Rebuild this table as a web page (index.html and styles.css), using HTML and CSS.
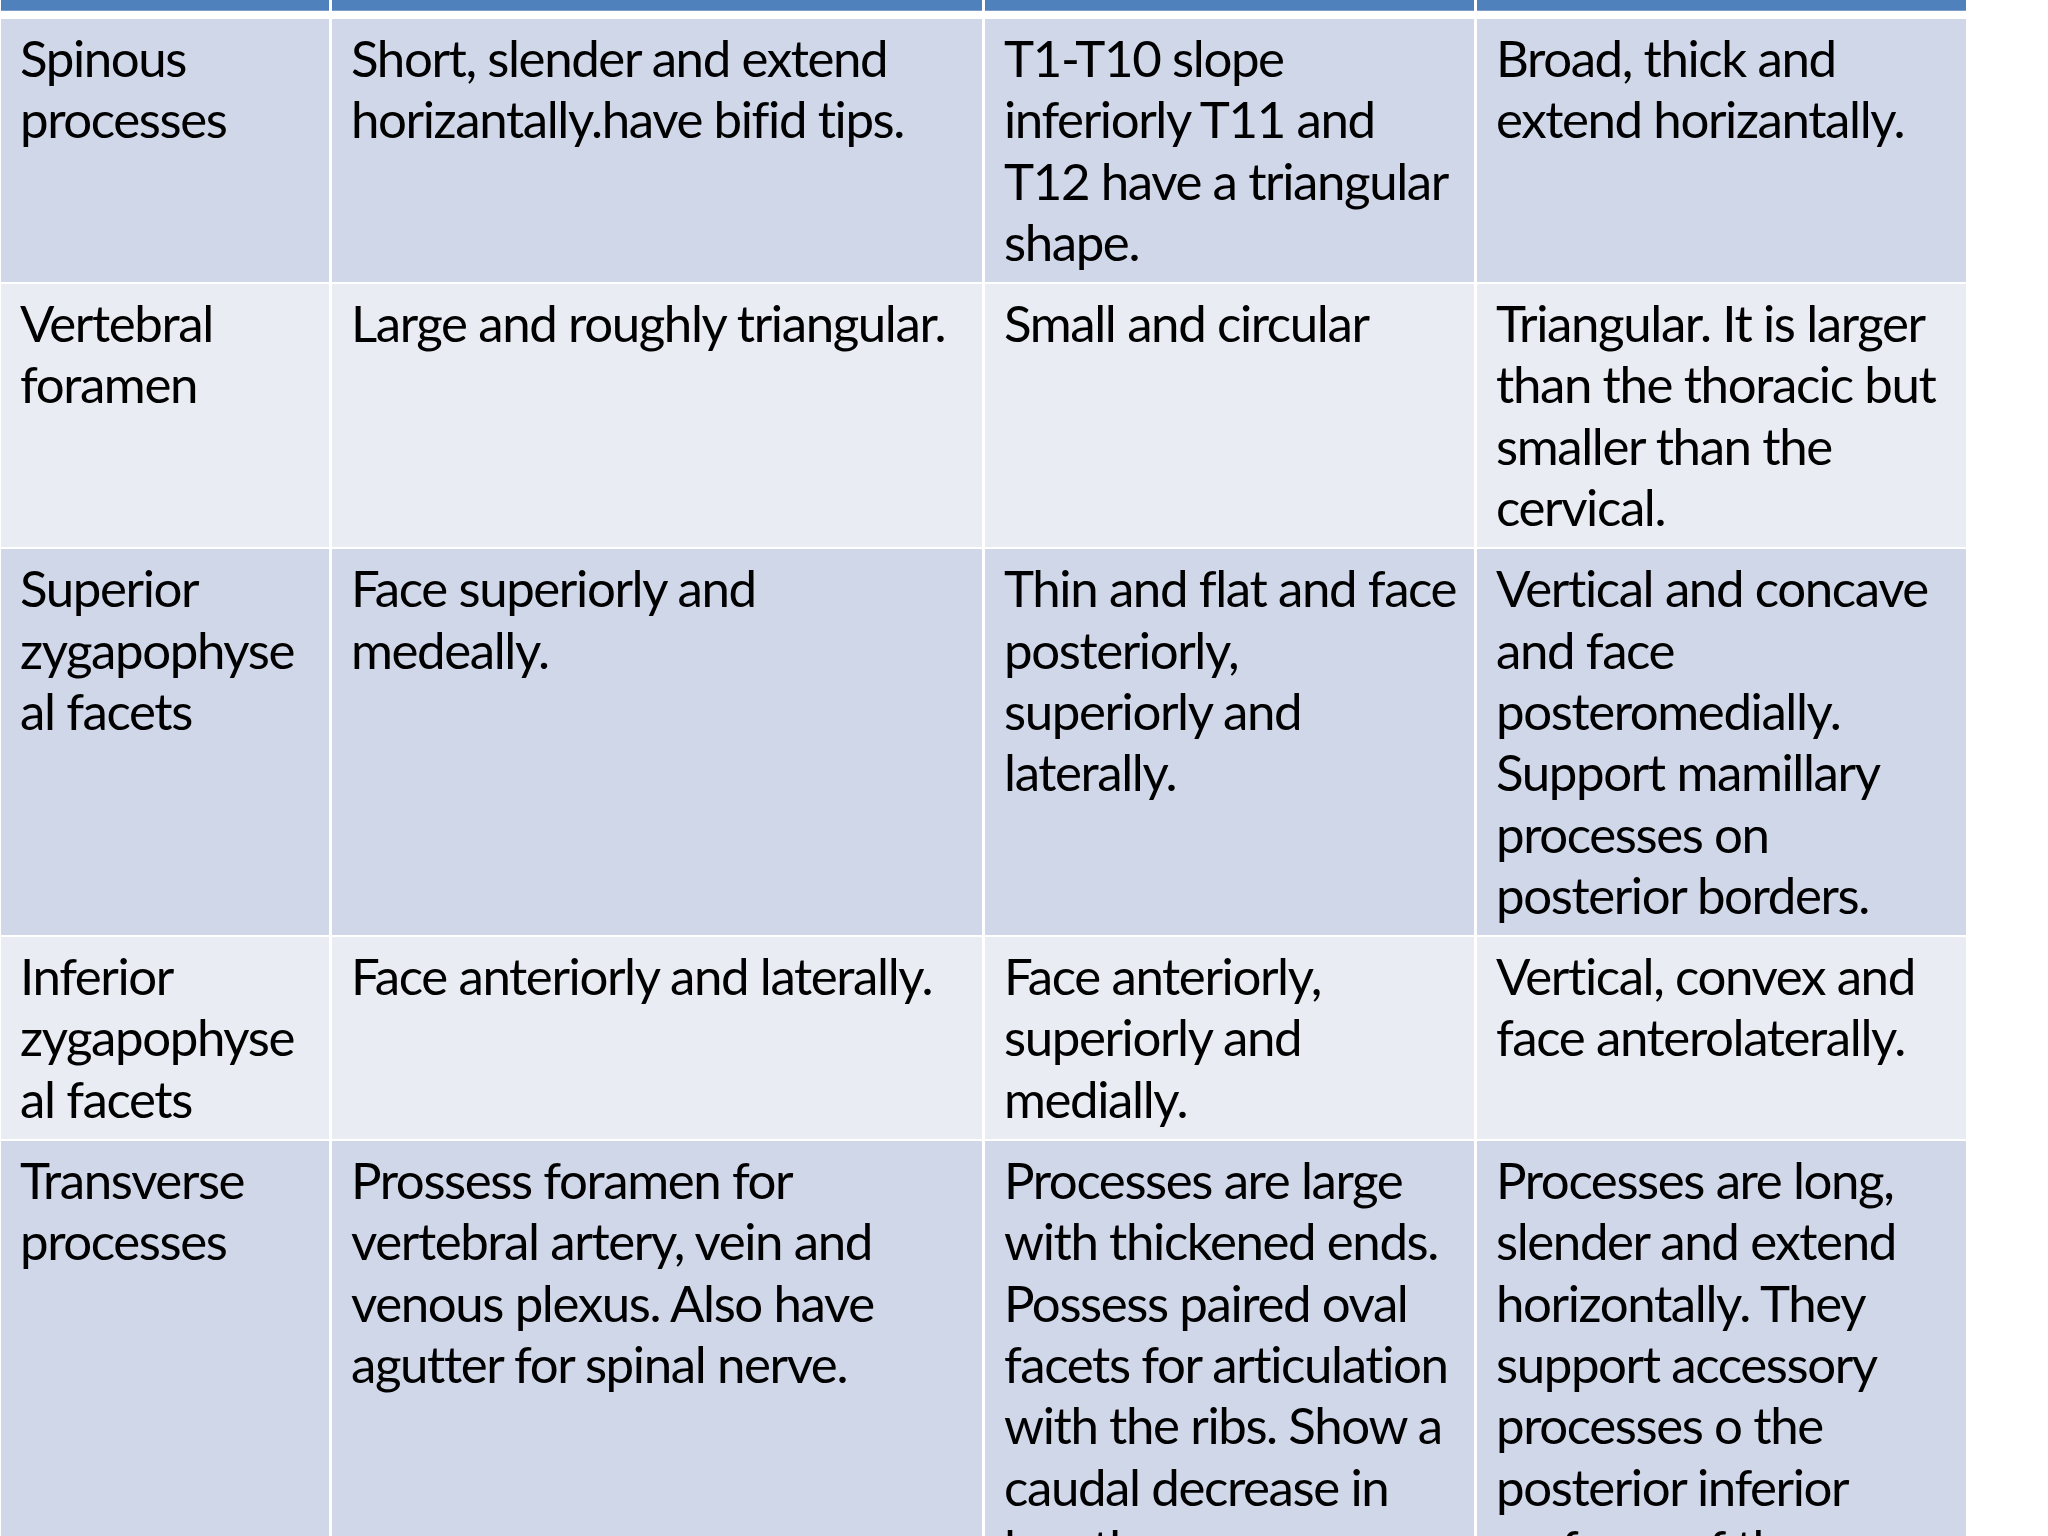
FILE: index.html
```html
<!DOCTYPE html>
<html lang="en">
<head>
<meta charset="utf-8">
<title>Vertebrae comparison</title>
<link rel="stylesheet" href="styles.css">
</head>
<body>
<div class="table">
  <div class="head"></div><div class="head"></div><div class="head"></div><div class="head"></div>

  <div class="cell dark">Spinous<br>processes</div>
  <div class="cell dark">Short, slender and extend<br>horizantally.have bifid tips.</div>
  <div class="cell dark">T1-T10 slope<br>inferiorly T11 and<br>T12 have a triangular<br>shape.</div>
  <div class="cell dark">Broad, thick and<br>extend horizantally.</div>

  <div class="cell light">Vertebral<br>foramen</div>
  <div class="cell light">Large and roughly triangular.</div>
  <div class="cell light">Small and circular</div>
  <div class="cell light">Triangular. It is larger<br>than the thoracic but<br>smaller than the<br>cervical.</div>

  <div class="cell dark">Superior<br>zygapophyse<br>al facets</div>
  <div class="cell dark">Face superiorly and<br>medeally.</div>
  <div class="cell dark">Thin and flat and face<br>posteriorly,<br>superiorly and<br>laterally.</div>
  <div class="cell dark">Vertical and concave<br>and face<br>posteromedially.<br>Support mamillary<br>processes on<br>posterior borders.</div>

  <div class="cell light">Inferior<br>zygapophyse<br>al facets</div>
  <div class="cell light">Face anteriorly and laterally.</div>
  <div class="cell light">Face anteriorly,<br>superiorly and<br>medially.</div>
  <div class="cell light">Vertical, convex and<br>face anterolaterally.</div>

  <div class="cell dark">Transverse<br>processes</div>
  <div class="cell dark">Prossess foramen for<br>vertebral artery, vein and<br>venous plexus. Also have<br>agutter for spinal nerve.</div>
  <div class="cell dark">Processes are large<br>with thickened ends.<br>Possess paired oval<br>facets for articulation<br>with the ribs. Show a<br>caudal decrease in<br>length.</div>
  <div class="cell dark">Processes are long,<br>slender and extend<br>horizontally. They<br>support accessory<br>processes o the<br>posterior inferior<br>surfaces of the</div>
</div>
</body>
</html>
```

FILE: styles.css
```css
html, body {
  margin: 0;
  padding: 0;
  background: #ffffff;
  overflow: hidden;
}

.table {
  display: grid;
  grid-template-columns: 328px 650px 489px 489px;
  column-gap: 3px;
  row-gap: 2px;
  margin-left: 1px;
  font-family: "Lato", "Liberation Sans", sans-serif;
  font-size: 51px;
  letter-spacing: -1.4px;
  line-height: 61.3px;
  color: #000000;
}

.head {
  height: 10px;
  background: #4f81bd;
  border-bottom: 1px solid #7e9ccd;
  margin-bottom: 6px;
}

.cell {
  white-space: nowrap;
  padding: 8px 10px 10px 19px;
  overflow: hidden;
}

.dark {
  background: #cfd7e8;
}

.light {
  background: #e9ecf3;
}
```
